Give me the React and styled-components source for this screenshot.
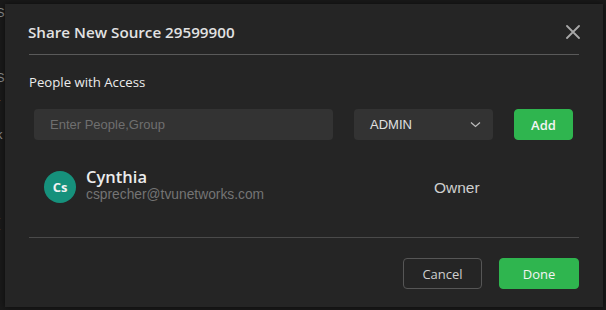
import React from 'react';
import styled, { createGlobalStyle } from 'styled-components';

const Global = createGlobalStyle`
  html, body {
    margin: 0;
    padding: 0;
    background: #161616;
  }
  * { box-sizing: border-box; }
`

const Backdrop = styled.div`
    width: 606px;
    height: 310px;
    position: relative;
    overflow: hidden;
    background: #1a1a1a;
`

const BehindText = styled.div`
    position: absolute;
    left: -4px;
    top: 0;
    font-family: "Liberation Sans", Arial, sans-serif;
    font-size: 13px;
    color: #8a8a8a;
    line-height: 1;
    span {
        position: absolute;
        left: 0;
    }
`

const Modal = styled.div`
    position: absolute;
    left: 5px;
    top: 4px;
    width: 598px;
    height: 303px;
    background: #252525;
    box-shadow: 0 0 6px rgba(0, 0, 0, 0.6);
    padding: 0 24px 19px;
    display: flex;
    flex-direction: column;
    font-family: "Open Sans", "Noto Sans", sans-serif;
`

const Header = styled.div`
    display: flex;
    align-items: center;
    justify-content: space-between;
    padding: 18px 0 12px;
    border-bottom: 1px solid #5a5a5a;
`

const Title = styled.div`
    font-size: 15.2px;
    line-height: 20px;
    font-weight: 600;
    color: #e2e2e2;
    margin-left: -1px;
`

const Close = styled.button`
    border: 0;
    background: none;
    padding: 0;
    margin-right: -1px;
    width: 14px;
    height: 14px;
    display: flex;
    cursor: pointer;
`

const Label = styled.div`
    margin-top: 18px;
    font-size: 13.2px;
    line-height: 18px;
    color: #ececec;
`

const InputRow = styled.div`
    display: flex;
    gap: 21px;
    margin-top: 18px;
    padding-left: 5px;
    height: 31px;
`

const Field = styled.input`
    width: 299px;
    height: 31px;
    border: 0;
    border-radius: 4px;
    background: #333333;
    padding: 0 16px;
    font-family: "Liberation Sans", Arial, sans-serif;
    font-size: 13px;
    color: #ddd;
    outline: none;
    &::placeholder {
        color: #6f6f6f;
    }
`

const Select = styled.div`
    width: 139px;
    display: flex;
    align-items: center;
    justify-content: space-between;
    padding: 0 12px 0 16px;
    border-radius: 4px;
    background: #333333;
    font-family: "Liberation Sans", Arial, sans-serif;
    font-size: 13px;
    color: #e0e0e0;
`

const Button = styled.button`
    height: 31px;
    width: ${p => p.$w}px;
    border-radius: 4px;
    font-family: "Open Sans", "Noto Sans", sans-serif;
    font-size: 13px;
    font-weight: ${p => p.$bold ? 600 : 400};
    cursor: pointer;
    padding: 0;
    border: 1px solid ${p => p.$primary ? '#2fb54f' : '#565656'};
    background: ${p => p.$primary ? '#2fb54f' : 'transparent'};
    color: ${p => p.$primary ? '#f4f4f4' : '#cfcfcf'};
`

const Person = styled.div`
    display: flex;
    align-items: center;
    margin-top: 30px;
    padding-left: 15px;
    padding-bottom: 34px;
    border-bottom: 1px solid #4a4a4a;
`

const Avatar = styled.div`
    width: 32px;
    height: 32px;
    border-radius: 50%;
    background: #16917c;
    color: #f2f2f2;
    font-size: 13px;
    font-weight: 700;
    display: flex;
    align-items: center;
    justify-content: center;
    flex-shrink: 0;
`

const Info = styled.div`
    margin-left: 10px;
    width: 348px;
    display: flex;
    flex-direction: column;
`

const Name = styled.div`
    font-size: 16.5px;
    line-height: 20px;
    font-weight: 600;
    color: #ececec;
    margin-top: -3px;
`

const Email = styled.div`
    font-family: "Liberation Sans", Arial, sans-serif;
    font-size: 13.8px;
    line-height: 16px;
    color: #747474;
`

const Role = styled.div`
    font-family: "Liberation Sans", Arial, sans-serif;
    font-size: 15.5px;
    color: #cfcfcf;
    margin-top: 2px;
`

const Footer = styled.div`
    display: flex;
    justify-content: flex-end;
    gap: 17px;
    margin-top: 20px;
`

const Chevron = () => (
    <svg width="11" height="7" viewBox="0 0 11 7">
        <path d="M1 1.5 L5.5 5.5 L10 1.5" fill="none" stroke="#bdbdbd" strokeWidth="1.2" />
    </svg>
)

const CloseIcon = () => (
    <svg width="14" height="14" viewBox="0 0 14 14">
        <path d="M1 1 L13 13 M13 1 L1 13" stroke="#a8a8a8" strokeWidth="1.8" strokeLinecap="round" />
    </svg>
)

const App = () => (
    <>
        <Global />
        <Backdrop>
            <BehindText>
                <span style={{ top: 6 }}>S</span>
                <span style={{ top: 71 }}>S</span>
                <span style={{ top: 96 }}>r</span>
                <span style={{ top: 128 }}>k</span>
                <span style={{ top: 216 }}>(</span>
            </BehindText>
            <Modal>
                <Header>
                    <Title>Share New Source 29599900</Title>
                    <Close><CloseIcon /></Close>
                </Header>
                <Label>People with Access</Label>
                <InputRow>
                    <Field placeholder="Enter People,Group" />
                    <Select>
                        <span>ADMIN</span>
                        <Chevron />
                    </Select>
                    <Button $primary $bold $w={59}>Add</Button>
                </InputRow>
                <Person>
                    <Avatar>Cs</Avatar>
                    <Info>
                        <Name>Cynthia</Name>
                        <Email>csprecher@tvunetworks.com</Email>
                    </Info>
                    <Role>Owner</Role>
                </Person>
                <Footer>
                    <Button $w={79}>Cancel</Button>
                    <Button $primary $w={80}>Done</Button>
                </Footer>
            </Modal>
        </Backdrop>
    </>
)

export default App;
